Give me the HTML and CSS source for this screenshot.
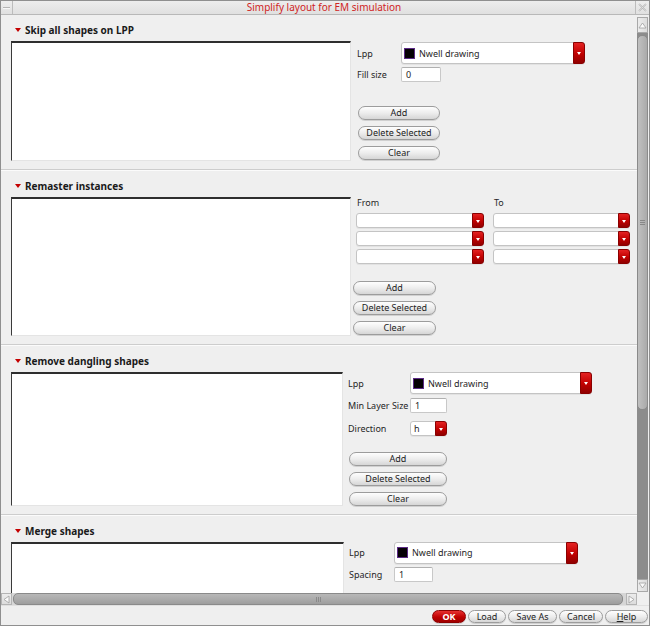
FILE: index.html
```html
<!DOCTYPE html>
<html>
<head>
<meta charset="utf-8">
<link rel="stylesheet" href="styles.css">
</head>
<body>
<div class="window">
  <div class="titlebar">
    <div class="tb-btn tb-min"><span class="dash"></span></div>
    <div class="tb-title">Simplify layout for EM simulation</div>
    <div class="tb-btn tb-close">
      <svg width="9" height="9" viewBox="0 0 9 9"><path d="M1 1 L8 8 M8 1 L1 8" stroke="#b0b0b0" stroke-width="1.6" fill="none"/><path d="M1 1 L8 8 M8 1 L1 8" stroke="#f4f4f4" stroke-width="0.5" fill="none"/></svg>
    </div>
  </div>
  <div class="main">
    <div class="viewport">
      <section class="sec sec1">
        <div class="sec-head"><span class="tri"></span>Skip all shapes on LPP</div>
        <div class="sec-body">
          <div class="list list1"></div>
          <div class="col col1">
            <div class="row row-dd"><span class="lbl lw44">Lpp</span><div class="dd dd-lpp w184"><span class="swatch"></span><span class="dd-text">Nwell drawing</span><span class="dd-btn"></span></div></div>
            <div class="row row-in mt3"><span class="lbl lw44">Fill size</span><div class="input w40">0</div></div>
            <div class="btns btns1">
              <button class="btn">Add</button>
              <button class="btn">Delete Selected</button>
              <button class="btn">Clear</button>
            </div>
          </div>
        </div>
      </section>

      <section class="sec">
        <div class="sec-head"><span class="tri"></span>Remaster instances</div>
        <div class="sec-body">
          <div class="list list2"></div>
          <div class="col col2">
            <div class="ft-grid">
              <span class="ft-lbl">From</span><span class="ft-lbl">To</span>
              <div class="dd dd-sm"><span class="dd-btn"></span></div><div class="dd dd-sm"><span class="dd-btn"></span></div>
              <div class="dd dd-sm"><span class="dd-btn"></span></div><div class="dd dd-sm"><span class="dd-btn"></span></div>
              <div class="dd dd-sm"><span class="dd-btn"></span></div><div class="dd dd-sm"><span class="dd-btn"></span></div>
            </div>
            <div class="btns btns2">
              <button class="btn">Add</button>
              <button class="btn">Delete Selected</button>
              <button class="btn">Clear</button>
            </div>
          </div>
        </div>
      </section>

      <section class="sec">
        <div class="sec-head"><span class="tri"></span>Remove dangling shapes</div>
        <div class="sec-body">
          <div class="list list3"></div>
          <div class="col col3">
            <div class="row row-dd"><span class="lbl lw62">Lpp</span><div class="dd dd-lpp w182"><span class="swatch"></span><span class="dd-text">Nwell drawing</span><span class="dd-btn"></span></div></div>
            <div class="row row-in mt4"><span class="lbl lw62">Min Layer Size</span><div class="input w37">1</div></div>
            <div class="row row-in mt8"><span class="lbl lw62">Direction</span><div class="dd dd-sm w37"><span class="dd-text dd-text-sm">h</span><span class="dd-btn"></span></div></div>
            <div class="btns btns3">
              <button class="btn">Add</button>
              <button class="btn">Delete Selected</button>
              <button class="btn">Clear</button>
            </div>
          </div>
        </div>
      </section>

      <section class="sec">
        <div class="sec-head"><span class="tri"></span>Merge shapes</div>
        <div class="sec-body">
          <div class="list list4"></div>
          <div class="col col4">
            <div class="row row-dd4"><span class="lbl lw45">Lpp</span><div class="dd dd-lpp w184"><span class="swatch"></span><span class="dd-text">Nwell drawing</span><span class="dd-btn"></span></div></div>
            <div class="row row-in mt4"><span class="lbl lw45">Spacing</span><div class="input w39">1</div></div>
          </div>
        </div>
      </section>
    </div>
    <div class="vscroll">
      <div class="sb-arrow sb-up"><svg width="9" height="7" viewBox="0 0 9 7"><polygon points="4.5,1 8,6 1,6" fill="#fafafa" stroke="#a0a0a0" stroke-width="0.8"/></svg></div>
      <div class="vtrough">
        <div class="vthumb"><span class="grip-h"></span></div>
      </div>
      <div class="sb-arrow sb-down"><svg width="9" height="7" viewBox="0 0 9 7"><polygon points="1,1 8,1 4.5,6" fill="#fafafa" stroke="#a0a0a0" stroke-width="0.8"/></svg></div>
    </div>
  </div>
  <div class="hbar">
    <div class="sb-harrow"><svg width="7" height="9" viewBox="0 0 7 9"><polygon points="1,4.5 6,1 6,8" fill="#fafafa" stroke="#a0a0a0" stroke-width="0.8"/></svg></div>
    <div class="htrough"><div class="hthumb"><span class="grip-v"></span></div></div>
    <div class="sb-harrow"><svg width="7" height="9" viewBox="0 0 7 9"><polygon points="1,1 6,4.5 1,8" fill="#fafafa" stroke="#a0a0a0" stroke-width="0.8"/></svg></div>
    <div class="corner"></div>
  </div>
  <div class="footer">
    <button class="fbtn fbtn-ok">OK</button>
    <button class="fbtn fw-load">Load</button>
    <button class="fbtn fw-save">Save As</button>
    <button class="fbtn fw-cancel">Cancel</button>
    <button class="fbtn fw-help"><u>H</u>elp</button>
  </div>
</div>
</body>
</html>
```

FILE: styles.css
```css
* { box-sizing: border-box; }
html, body { margin: 0; padding: 0; }
body {
  width: 650px;
  height: 626px;
  font-family: "Noto Sans", "DejaVu Sans", sans-serif;
  font-size: 9px;
  color: #262626;
  background: #efefef;
}
.window {
  width: 650px;
  height: 626px;
  border: 1px solid #8f8f8f;
  background: #efefef;
  display: flex;
  flex-direction: column;
  overflow: hidden;
}
/* title bar */
.titlebar {
  height: 14px;
  flex: none;
  display: flex;
  background: linear-gradient(#ededed, #e0e0e0);
  border-bottom: 1px solid #b8b8b8;
}
.tb-btn {
  width: 12px;
  flex: none;
  display: flex;
  align-items: center;
  justify-content: center;
}
.tb-min { border-right: 1px solid #bcbcbc; }
.tb-close { width: 14px; border-left: 1px solid #bcbcbc; }
.dash {
  width: 7px;
  height: 2px;
  background: #b4b4b4;
  border-bottom: 1px solid #f6f6f6;
}
.tb-title {
  flex: 1;
  text-align: center;
  color: #d02424;
  font-size: 10px;
  line-height: 13px;
}
/* main */
.main {
  height: 578px;
  flex: none;
  display: flex;
}
.viewport {
  width: 636px;
  flex: none;
  overflow: hidden;
}
.sec {
  padding: 8px 0 8px 10px;
  border-bottom: 1px solid #cdcdcd;
  box-shadow: 0 1px 0 #fbfbfb;
}
.sec1 { padding-top: 7px; }
.sec-head {
  height: 16px;
  display: flex;
  align-items: center;
  padding-left: 4px;
  font-weight: bold;
  font-size: 10px;
  color: #1a1a1a;
}
.tri {
  width: 0;
  height: 0;
  border-left: 3px solid transparent;
  border-right: 3px solid transparent;
  border-top: 4px solid #c40000;
  margin-right: 4px;
}
.sec-body {
  display: flex;
  margin-top: 3px;
  align-items: flex-start;
}
.list {
  background: #fff;
  border-top: 2px solid #2e2e2e;
  border-left: 1px solid #3a3a3a;
  border-right: 1px solid #e4e4e4;
  border-bottom: 1px solid #e4e4e4;
  flex: none;
}
.list1 { width: 340px; height: 120px; }
.list2 { width: 340px; height: 139px; }
.list3 { width: 332px; height: 134px; }
.list4 { width: 333px; height: 120px; }

.col { display: flex; flex-direction: column; }
.col1 { margin-left: 6px; padding-top: 1px; }
.col2 { margin-left: 2px; }
.col3 { margin-left: 5px; }
.col4 { margin-left: 5px; }

.row { display: flex; align-items: center; }
.row-dd { height: 22px; }
.row-dd4 { height: 21px; }
.row-in { height: 15px; }
.mt3 { margin-top: 3px; }
.mt4 { margin-top: 4px; }
.mt8 { margin-top: 8px; }
.lbl { white-space: nowrap; flex: none; }
.lw44 { width: 44px; }
.lw45 { width: 45px; }
.lw62 { width: 62px; }

.w37 { width: 37px; }
.w39 { width: 39px; }
.w40 { width: 40px; }
.w182 { width: 182px; }
.w184 { width: 184px; }

/* dropdown */
.dd {
  position: relative;
  height: 100%;
  background: #fff;
  border: 1px solid #c4c4c4;
  border-radius: 3px;
  box-shadow: 0 1px 0 #e2e2e2;
  display: flex;
  align-items: center;
}
.dd-lpp { height: 22px; padding-left: 2px; }
.dd-sm { height: 15px; }
.dd-btn {
  position: absolute;
  top: -1px;
  right: -1px;
  bottom: -1px;
  width: 12px;
  border-radius: 0 3px 3px 0;
  background: linear-gradient(#e42222, #c00000 55%, #900000);
  border: 1px solid #8a0000;
}
.dd-btn::after {
  content: "";
  position: absolute;
  left: 3px;
  top: 50%;
  margin-top: -1px;
  border-left: 2px solid transparent;
  border-right: 2px solid transparent;
  border-top: 3px solid #fff;
}
.swatch {
  width: 11px;
  height: 11px;
  background: #050005;
  border: 1.5px solid #5b2a86;
  margin-right: 4px;
  flex: none;
}
.dd-text { font-size: 9px; white-space: nowrap; }
.dd-text-sm { padding-left: 3px; }

.input {
  height: 15px;
  background: #fff;
  border: 1px solid #c8c8c8;
  border-top-color: #b0b0b0;
  border-radius: 2px;
  padding-left: 4px;
  line-height: 13px;
  font-size: 9px;
}

/* remaster grid */
.ft-grid {
  display: grid;
  grid-template-columns: 128px 137px;
  column-gap: 9px;
  row-gap: 3px;
  padding-left: 3px;
}
.ft-lbl {
  height: 12px;
  line-height: 12px;
  margin-bottom: 1px;
  padding-left: 1px;
}

/* buttons */
.btns { display: flex; flex-direction: column; gap: 6px; }
.btns1 { margin-top: 24px; margin-left: 1px; width: 82px; }
.btns2 { margin-top: 17px; width: 83px; }
.btns3 { margin-top: 16px; margin-left: 1px; width: 98px; }
.btn, .fbtn {
  font-family: "Noto Sans", "DejaVu Sans", sans-serif;
  font-size: 9px;
  color: #222;
  height: 14px;
  padding: 0;
  margin: 0;
  line-height: 12px;
  border: 1px solid #9c9c9c;
  border-radius: 7px;
  background: linear-gradient(#fefefe, #ededed 50%, #d6d6d6);
  box-shadow: 0 1px 0 #d0d0d0;
}

/* vertical scrollbar */
.vscroll {
  width: 11px;
  flex: none;
  margin: 2px 0 1px 0;
  display: flex;
  flex-direction: column;
  background: #8e8e8e;
}
.sb-arrow {
  flex: none;
  background: linear-gradient(to right, #ececec, #dcdcdc);
  border: 1px solid #a8a8a8;
  display: flex;
  align-items: center;
  justify-content: center;
}
.sb-up { height: 16px; }
.sb-down { height: 13px; }
.vtrough {
  flex: 1;
  padding-top: 2px;
  background: #8c8c8c;
}
.vthumb {
  height: 375px;
  border: 1px solid #8a8a8a;
  border-radius: 5px;
  background: linear-gradient(to right, #c0c0c0, #aaaaaa);
  display: flex;
  align-items: center;
  justify-content: center;
}
.grip-h {
  width: 5px;
  height: 5px;
  border-top: 1px solid #888;
  border-bottom: 1px solid #888;
  background: linear-gradient(transparent 1px, #888 1px, #888 2px, transparent 2px);
}

/* horizontal scrollbar */
.hbar {
  height: 12px;
  flex: none;
  display: flex;
}
.sb-harrow {
  width: 11px;
  flex: none;
  background: linear-gradient(#ececec, #dcdcdc);
  border: 1px solid #b4b4b4;
  display: flex;
  align-items: center;
  justify-content: center;
}
.htrough {
  flex: 1;
  background: #d6d6d6;
  padding: 0 3px 0 1px;
}
.hthumb {
  height: 100%;
  border: 1px solid #8a8a8a;
  border-radius: 5px;
  background: linear-gradient(#b8b8b8, #9e9e9e);
  display: flex;
  align-items: center;
  justify-content: center;
}
.grip-v {
  width: 5px;
  height: 5px;
  border-left: 1px solid #8a8a8a;
  border-right: 1px solid #8a8a8a;
  background: linear-gradient(to right, transparent 1px, #8a8a8a 1px, #8a8a8a 2px, transparent 2px);
}
.corner { width: 12px; flex: none; background: #efefef; }

/* footer */
.footer {
  flex: 1;
  display: flex;
  justify-content: flex-end;
  align-items: flex-start;
  gap: 2px;
  padding: 4px 1px 0 0;
  border-top: 1px solid #e0e0e0;
}
.fbtn { height: 13px; line-height: 11px; border-radius: 7px; }
.fbtn-ok {
  width: 34px;
  color: #fff;
  font-weight: bold;
  border-color: #8c0000;
  background: linear-gradient(#e63030, #c00000 55%, #a00000);
}
.fw-load { width: 38px; }
.fw-save { width: 49px; }
.fw-cancel { width: 44px; }
.fw-help { width: 43px; }
```
